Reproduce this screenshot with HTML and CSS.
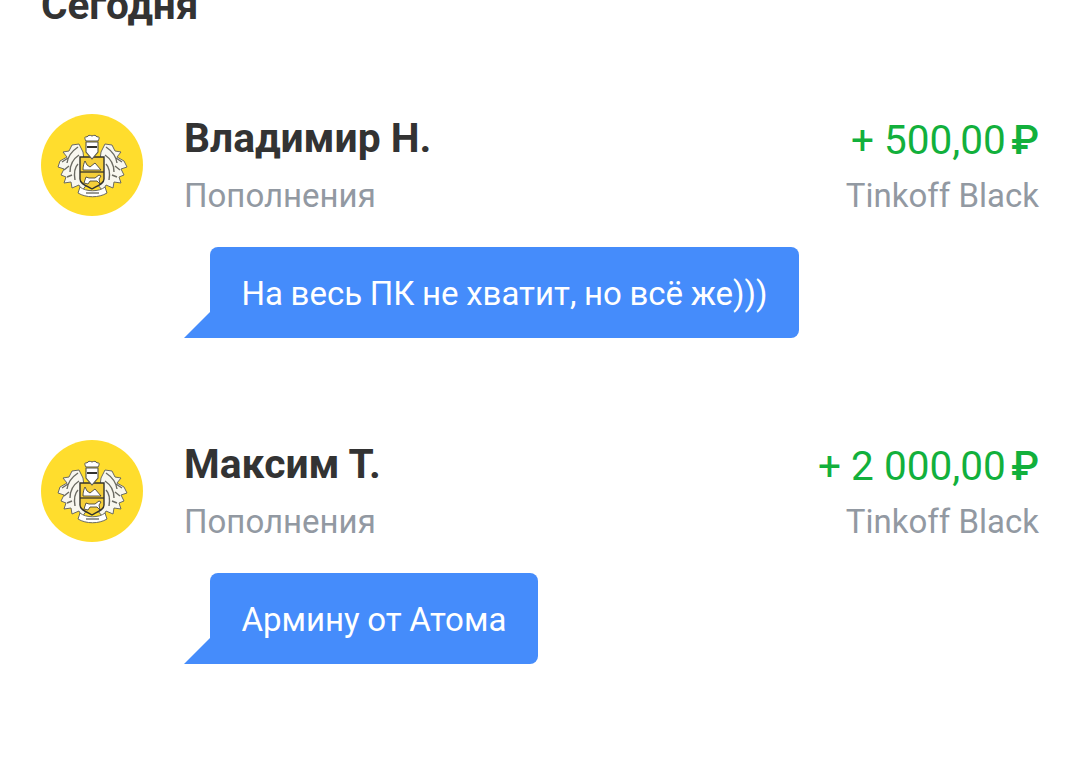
FILE: index.html
```html
<!DOCTYPE html>
<html lang="ru">
<head>
    <meta charset="UTF-8">
    <meta name="viewport" content="width=device-width, initial-scale=1.0">
    <title>Сегодня</title>
    <link rel="stylesheet" href="styles.css">
</head>
<body>
    <svg class="defs" width="0" height="0">
        <symbol id="logo" viewBox="0 0 102 102">
            <circle cx="51" cy="51" r="51" fill="#ffdd2d"/>
            <!-- левое крыло -->
            <path d="M42 38L38 30L31 31L28 37L22 38L26 43L19 47L17 53L23 55L20 61L25 63L23 69L30 68L31 74L38 71L41 77L46 70Z" fill="#f8f7ef" stroke="#6a6a62" stroke-width="1"/>
            <path d="M37 33C31 37 27 42 26 49M38 41C32 45 29 50 29 58M37 50C33 54 33 60 34 66M27 44L21 48M28 52L23 56M31 61L26 63" fill="none" stroke="#6a6a62" stroke-width="1.4"/>
            <!-- правое крыло -->
            <path d="M60 38L64 30L71 31L74 37L80 38L76 43L83 47L86 53L80 55L83 61L78 63L80 69L73 68L72 74L65 71L62 77L56 70Z" fill="#f8f7ef" stroke="#6a6a62" stroke-width="1"/>
            <path d="M65 33C71 37 75 42 76 49M64 41C70 45 73 50 73 58M65 50C69 54 69 60 68 66M75 44L81 48M74 52L79 56M71 61L76 63" fill="none" stroke="#6a6a62" stroke-width="1.4"/>
            <!-- лента -->
            <path d="M39 73C45 78 58 78 64 73L66 79C58 84 45 84 37 79Z" fill="#fff" stroke="#6a6a62" stroke-width="1"/>
            <path d="M45 79H58" stroke="#55554e" stroke-width="1.2"/>
            <!-- щит -->
            <path d="M39 43H63V65C63 70 56 72 51 75C46 72 39 70 39 65Z" fill="#f5cf3a" stroke="#33332e" stroke-width="1.4"/>
            <path d="M39 58H63" stroke="#33332e" stroke-width="1.3"/>
            <path d="M42 56C42 52 43 49 44 47L46 51L49 53L54 49L60 56Z" fill="#fff" stroke="#33332e" stroke-width="0.8"/>
            <path d="M43 69L45 63L48 64H54L58 61L60 62L58 65L59 70L56 67H49L47 70Z" fill="#fff" stroke="#33332e" stroke-width="0.8"/>
            <!-- шлем и корона -->
            <path d="M45 27C43 24 44 22 46 23C47 21 49 21 51 22C53 21 55 21 56 23C58 22 59 24 57 27Z" fill="#fff" stroke="#55554e" stroke-width="1"/>
            <path d="M45 28H57V38L51 45L45 38Z" fill="#fff" stroke="#55554e" stroke-width="1.1"/>
            <path d="M46 33H56" stroke="#33332e" stroke-width="2"/>
        </symbol>
    </svg>

    <main class="feed">
        <h2 class="day">Сегодня</h2>

        <section class="operation">
            <svg class="avatar"><use href="#logo"/></svg>
            <div class="details">
                <div class="row">
                    <div class="name">Владимир Н.</div>
                    <div class="sum">+ 500,00<span class="rub">₽</span></div>
                </div>
                <div class="row row-sub">
                    <div class="sub">Пополнения</div>
                    <div class="sub">Tinkoff Black</div>
                </div>
                <div class="message">На весь ПК не хватит, но всё же)))</div>
            </div>
        </section>

        <section class="operation">
            <svg class="avatar"><use href="#logo"/></svg>
            <div class="details">
                <div class="row">
                    <div class="name">Максим Т.</div>
                    <div class="sum">+ 2 000,00<span class="rub">₽</span></div>
                </div>
                <div class="row row-sub">
                    <div class="sub">Пополнения</div>
                    <div class="sub">Tinkoff Black</div>
                </div>
                <div class="message">Армину от Атома</div>
            </div>
        </section>
    </main>
</body>
</html>
```
FILE: styles.css
```css
html, body {
    height: 100%;
}

body {
    margin: 0;
    background-color: #fff;
    font-family: Roboto, "Liberation Sans", sans-serif;
    overflow: hidden;
}

.defs {
    position: absolute;
}

.feed {
    padding: 0 41px;
    margin-top: -15px;
}

.day {
    margin: 0 0 89px;
    height: 40px;
    font-size: 40.5px;
    line-height: 40px;
    font-weight: 700;
    color: #333;
}

.operation {
    display: flex;
    gap: 41px;
    height: 326px;
}

.avatar {
    flex: none;
    width: 102px;
    height: 102px;
}

.details {
    flex: 1;
}

.row {
    display: flex;
    justify-content: space-between;
    align-items: center;
    height: 52px;
}

.row-sub {
    height: 44px;
    margin-top: 7px;
}

.name {
    margin-bottom: 4px;
    font-size: 40.8px;
    font-weight: 700;
    color: #333;
}

.sum {
    font-size: 40.5px;
    color: #12b03c;
}

.rub {
    margin-left: 5.5px;
    font-weight: 500;
}

.sub {
    font-size: 33px;
    color: #9299a2;
}

.message {
    position: relative;
    width: fit-content;
    margin: 30px 0 0 26px;
    padding: 0 31.5px;
    height: 91px;
    line-height: 94px;
    font-size: 33px;
    word-spacing: -0.6px;
    color: #fff;
    background-color: #458cfb;
    border-radius: 8px 8px 8px 0;
}

/* хвостик сообщения */
.message::before {
    content: "";
    position: absolute;
    left: -26px;
    bottom: 0;
    border-style: solid;
    border-width: 0 0 26px 26px;
    border-color: transparent transparent #458cfb transparent;
}
```
